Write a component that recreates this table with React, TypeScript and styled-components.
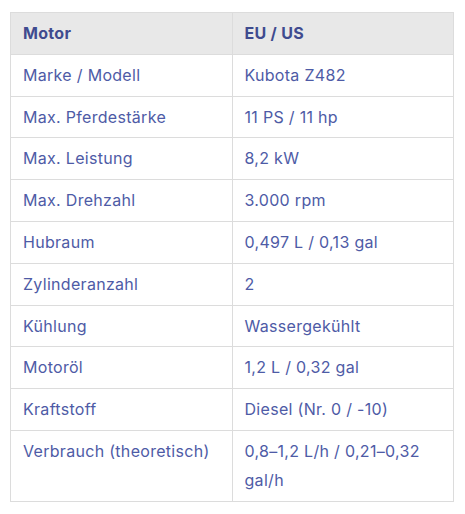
import { createGlobalStyle } from 'styled-components';
import styled from 'styled-components';

const GlobalStyle = createGlobalStyle`
  body {
    margin: 0;
    background: #ffffff;
    font-family: Inter, "Noto Sans", sans-serif;
  }
`;

const Wrapper = styled.div`
  padding: 12px 11px 12px 10px;
`;

const Table = styled.table`
  width: 100%;
  border-collapse: collapse;
  border: 1px solid #dcdcdc;
  font-size: 16px;
  line-height: 28.8px;
  letter-spacing: 0.3px;
  color: #4e5ba6;
`;

const HeadCell = styled.th`
  background: #e8e8e8;
  color: #3f4b8f;
  font-weight: 700;
  text-align: left;
  padding: 6px 12px;
  border: 1px solid #dcdcdc;
  width: 50%;
`;

const Cell = styled.td`
  padding: 6px 12px;
  border: 1px solid #dcdcdc;
  vertical-align: top;
  width: 50%;
`;

const rows: [string, string][] = [
  ['Marke / Modell', 'Kubota Z482'],
  ['Max. Pferdestärke', '11 PS / 11 hp'],
  ['Max. Leistung', '8,2 kW'],
  ['Max. Drehzahl', '3.000 rpm'],
  ['Hubraum', '0,497 L / 0,13 gal'],
  ['Zylinderanzahl', '2'],
  ['Kühlung', 'Wassergekühlt'],
  ['Motoröl', '1,2 L / 0,32 gal'],
  ['Kraftstoff', 'Diesel (Nr. 0 / -10)'],
  ['Verbrauch (theoretisch)', '0,8–1,2 L/h / 0,21–0,32 gal/h'],
];

export default function App() {
  return (
    <>
      <GlobalStyle />
      <Wrapper>
        <Table>
          <thead>
            <tr>
              <HeadCell>Motor</HeadCell>
              <HeadCell>EU / US</HeadCell>
            </tr>
          </thead>
          <tbody>
            {rows.map(([label, value]) => (
              <tr key={label}>
                <Cell>{label}</Cell>
                <Cell>{value}</Cell>
              </tr>
            ))}
          </tbody>
        </Table>
      </Wrapper>
    </>
  );
}
